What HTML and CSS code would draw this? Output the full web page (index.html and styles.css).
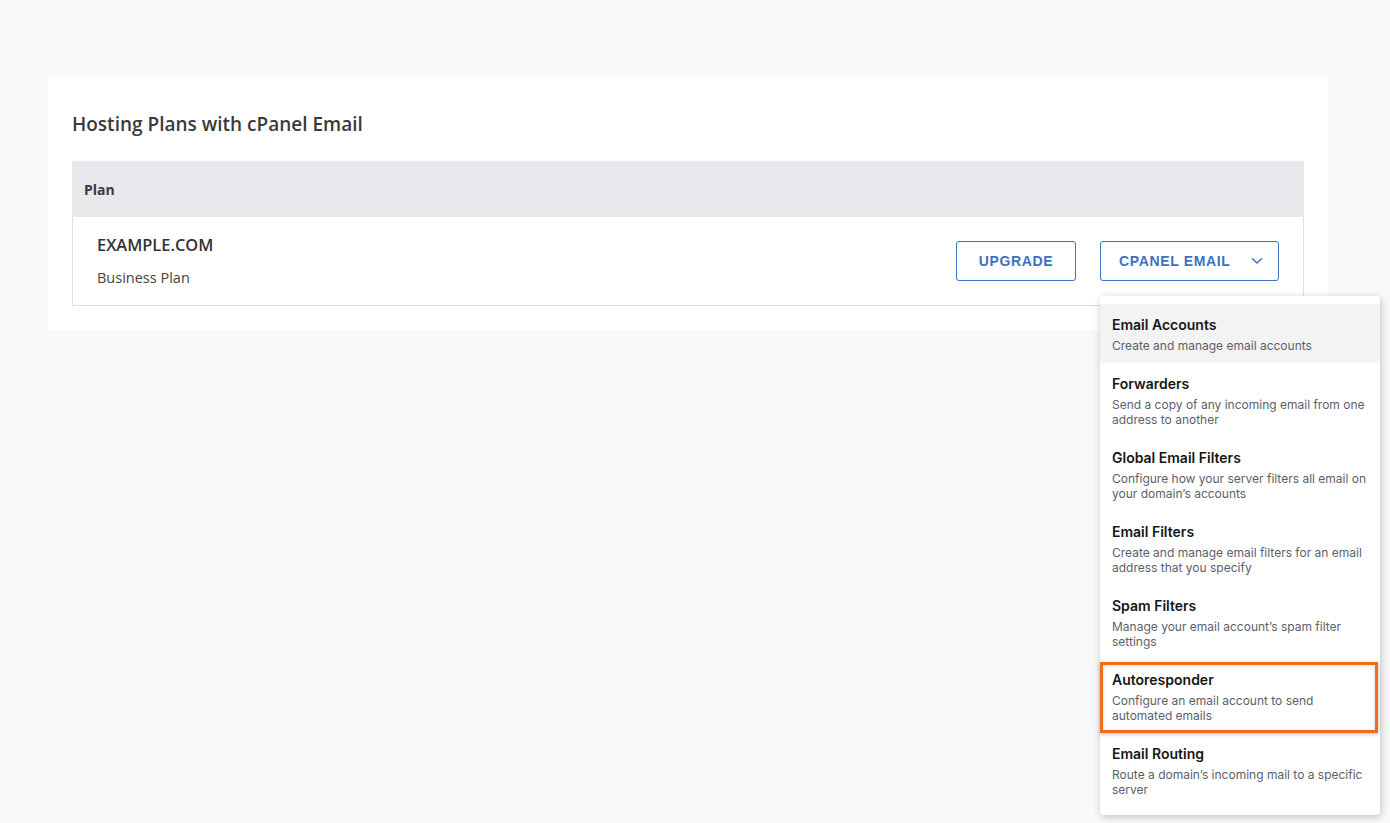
FILE: index.html
```html
<!DOCTYPE html>
<html lang="en">
<head>
<meta charset="utf-8">
<title>Hosting Plans with cPanel Email</title>
<link rel="stylesheet" href="styles.css">
</head>
<body>
<main class="page">
  <section class="card">
    <h2 class="card-title">Hosting Plans with cPanel Email</h2>
    <div class="table">
      <div class="table-head">Plan</div>
      <div class="table-row">
        <div class="plan-info">
          <div class="plan-domain">EXAMPLE.COM</div>
          <div class="plan-name">Business Plan</div>
        </div>
        <div class="actions">
          <button class="btn">UPGRADE</button>
          <div class="menu-wrap">
            <button class="btn btn-menu"><span>CPANEL EMAIL</span>
              <svg class="chev" width="12" height="8" viewBox="0 0 12 8"><path d="M1.5 1.8 6 6 10.5 1.8" fill="none" stroke="#3d72c3" stroke-width="1.5" stroke-linecap="round" stroke-linejoin="round"/></svg>
            </button>
            <ul class="menu">
              <li class="menu-item active"><div class="mi-title">Email Accounts</div><div class="mi-desc">Create and manage email accounts</div></li>
              <li class="menu-item"><div class="mi-title">Forwarders</div><div class="mi-desc">Send a copy of any incoming email from one address to another</div></li>
              <li class="menu-item"><div class="mi-title">Global Email Filters</div><div class="mi-desc">Configure how your server filters all email on your domain’s accounts</div></li>
              <li class="menu-item"><div class="mi-title">Email Filters</div><div class="mi-desc">Create and manage email filters for an email address that you specify</div></li>
              <li class="menu-item"><div class="mi-title">Spam Filters</div><div class="mi-desc">Manage your email account’s spam filter settings</div></li>
              <li class="menu-item highlighted"><div class="mi-title">Autoresponder</div><div class="mi-desc">Configure an email account to send automated emails</div><span class="highlight-box"></span></li>
              <li class="menu-item"><div class="mi-title">Email Routing</div><div class="mi-desc">Route a domain’s incoming mail to a specific server</div></li>
            </ul>
          </div>
        </div>
      </div>
    </div>
  </section>
</main>
</body>
</html>
```

FILE: styles.css
```css
* { box-sizing: border-box; }
html, body { margin: 0; padding: 0; }
body {
  background: #f9f9f9;
  font-family: "Open Sans", "Noto Sans", sans-serif;
  color: #333;
  width: 1390px;
  height: 823px;
  overflow: hidden;
}
.page {
  padding: 77px 62px 0 48px;
}
.card {
  background: #fff;
  padding: 33px 24px 24px 24px;
}
.card-title {
  margin: 0 0 23px 0;
  font-size: 19px;
  line-height: 28px;
  font-weight: 600;
  color: #3a3a3a;
}
.table-head {
  height: 56px;
  background: #e8e8ed;
  display: flex;
  align-items: center;
  padding-left: 12px;
  font-size: 14px;
  font-weight: 700;
  color: #3b3b3b;
}
.table-row {
  display: flex;
  align-items: center;
  justify-content: space-between;
  border: 1px solid #dedede;
  border-top: none;
  padding: 16px 24px 17px 24px;
}
.plan-domain {
  font-size: 16.4px;
  line-height: 24px;
  font-weight: 600;
  color: #333;
  margin-bottom: 11px;
}
.plan-name {
  font-size: 14.5px;
  line-height: 20px;
  color: #444;
}
.actions {
  display: flex;
  gap: 24px;
  align-items: center;
}
.btn {
  height: 40px;
  width: 120px;
  background: #fff;
  border: 1px solid #3d72c3;
  border-radius: 3px;
  color: #3d72c3;
  font-family: "Liberation Sans", Arial, sans-serif;
  font-size: 14px;
  font-weight: 700;
  letter-spacing: 0.65px;
  padding: 0;
  display: flex;
  align-items: center;
  justify-content: center;
}
.btn-menu {
  width: 179px;
  justify-content: space-between;
  padding: 0 15px 0 18px;
}
.chev {
  display: block;
  margin-top: 1px;
}
.menu-wrap {
  position: relative;
}
.menu {
  position: absolute;
  top: 55px;
  left: 0;
  width: 280px;
  margin: 0;
  padding: 8px 0;
  list-style: none;
  background: #fff;
  border-radius: 4px;
  box-shadow: 1px 2px 8px rgba(0,0,0,0.22);
  font-family: "Inter", "Noto Sans", sans-serif;
  z-index: 10;
}
.menu-item {
  position: relative;
  padding: 11px 12px 10px 12px;
}
.menu-item.active {
  background: #f3f3f3;
}
.mi-title {
  font-size: 14px;
  line-height: 20px;
  font-weight: 600;
  color: #161616;
  margin-bottom: 3px;
}
.mi-desc {
  font-size: 12px;
  line-height: 15px;
  color: #5b5f6b;
}
.highlight-box {
  position: absolute;
  top: 3px;
  left: 0;
  right: 2px;
  bottom: 0;
  border: 3px solid #f26b1d;
  box-shadow: 0 1px 4px rgba(0,0,0,0.25), inset 0 1px 4px rgba(0,0,0,0.15);
  pointer-events: none;
}
```
